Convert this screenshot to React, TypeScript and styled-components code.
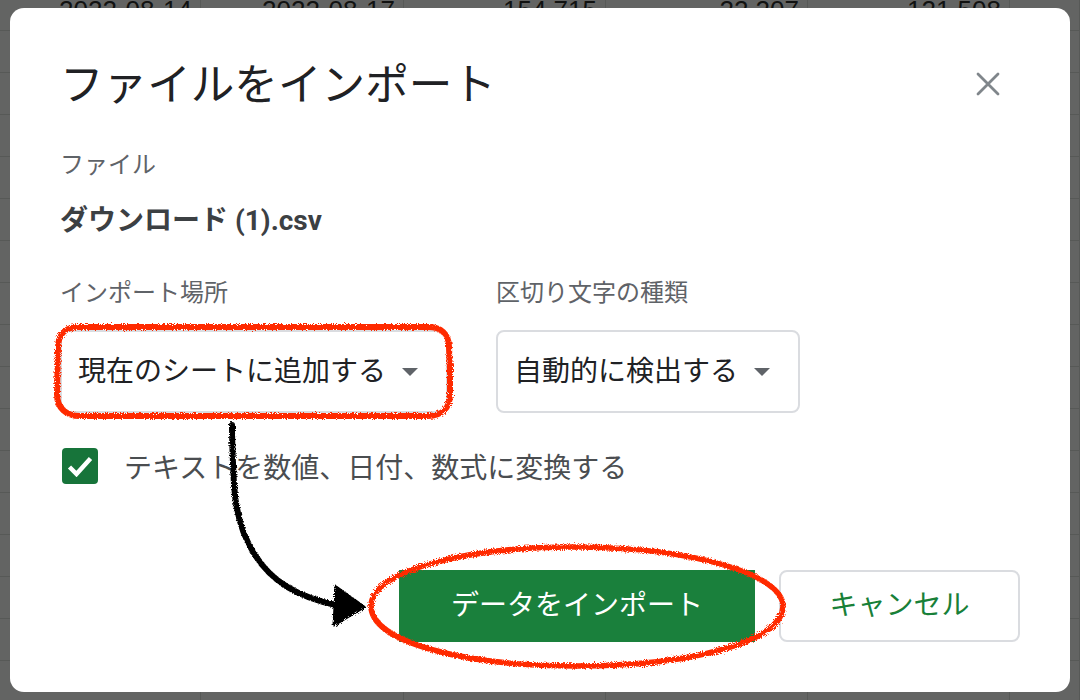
import styled, { createGlobalStyle } from 'styled-components'

const GlobalStyle = createGlobalStyle`
    html, body {
        margin: 0;
        padding: 0;
        background: #636463;
    }
`

const Page = styled.div`
    position: relative;
    width: 1080px;
    height: 700px;
    overflow: hidden;
    font-family: Roboto, 'Noto Sans CJK JP', sans-serif;
`

const Sheet = styled.div`
    display: grid;
    grid-template-columns: 201px 203px 202px 202px 202px 70px;
    grid-template-rows: 31px;
    grid-auto-rows: 42px;
    height: 700px;
    overflow: hidden;
    background: #636463;
`

const Cell = styled.div`
    box-sizing: border-box;
    padding-right: 8px;
    border-right: 1px solid #575957;
    border-bottom: 1px solid #575957;
    overflow: hidden;
    font-family: 'Liberation Sans', sans-serif;
    font-size: 26px;
    line-height: 20px;
    text-align: right;
    color: #111211;
`

const Dialog = styled.div`
    position: absolute;
    top: 8px;
    left: 10px;
    box-sizing: border-box;
    width: 1060px;
    height: 684px;
    padding: 50px;
    background: #fff;
    border-radius: 14px;
`

const Header = styled.div`
    display: flex;
    justify-content: space-between;
    align-items: center;
    height: 52px;
`

const Title = styled.div`
    margin-top: 4px;
    font-size: 43.6px;
    line-height: 52px;
    color: #202124;
`

const CloseIcon = styled.svg`
    width: 24px;
    height: 24px;
    margin-right: 20px;
`

const Label = styled.div`
    font-size: 24px;
    line-height: 32px;
    color: #5f6368;
`

const FileSection = styled.div`
    margin-top: 39px;
`

const FileName = styled.div`
    margin-top: 24px;
    font-size: 28px;
    font-weight: 700;
    line-height: 32px;
    color: #3c4043;
`

const Fields = styled.div`
    display: flex;
    gap: 48px;
    margin-top: 40px;
`

const Field = styled.div`
    display: flex;
    flex-direction: column;
    gap: 21px;
`

const Select = styled.div<{ $width: number }>`
    box-sizing: border-box;
    display: flex;
    justify-content: space-between;
    align-items: center;
    width: ${(p) => p.$width}px;
    height: 83px;
    padding: 0 28px 0 16px;
    border: 2px solid #dadce0;
    border-radius: 8px;
    font-size: 28px;
    color: #202124;
`

const SelectText = styled.span`
    margin-bottom: 6px;
`

const Caret = styled.span`
    width: 0;
    height: 0;
    border-left: 8px solid transparent;
    border-right: 8px solid transparent;
    border-top: 8px solid #5f6368;
`

const CheckRow = styled.div`
    display: flex;
    align-items: flex-start;
    gap: 26px;
    margin: 35px 0 0 2px;
    font-size: 28px;
    line-height: 36px;
    color: #4a4d50;
`

const CheckText = styled.span`
    margin-top: 3px;
`

const CheckBox = styled.span`
    display: flex;
    align-items: center;
    justify-content: center;
    width: 36px;
    height: 36px;
    border-radius: 4px;
    background: #17743a;
`

const Actions = styled.div`
    display: flex;
    justify-content: flex-end;
    gap: 24px;
    margin-top: 83px;
`

const ActionButton = styled.div<{ $primary?: boolean }>`
    box-sizing: border-box;
    display: flex;
    align-items: center;
    justify-content: center;
    width: ${(p) => (p.$primary ? 356 : 241)}px;
    height: 72px;
    padding-bottom: 6px;
    font-size: 28px;
    color: ${(p) => (p.$primary ? '#fff' : '#188038')};
    background: ${(p) => (p.$primary ? '#1a803c' : '#fff')};
    border: ${(p) => (p.$primary ? 'none' : '2px solid #dadce0')};
    border-radius: ${(p) => (p.$primary ? 0 : 8)}px;
`

const Annotations = styled.svg`
    position: absolute;
    top: 0;
    left: 0;
    width: 1080px;
    height: 700px;
    pointer-events: none;
`

const topRow = ['2022-08-14', '2022-08-17', '154,715', '22,207', '121,508', '']

const sheetCells = Array.from({ length: 17 * 6 }, (_, i) => (i < 6 ? topRow[i] : ''))

export default function App() {
    return (
        <Page>
            <GlobalStyle />
            <Sheet>
                {sheetCells.map((text, i) => (
                    <Cell key={i}>{text}</Cell>
                ))}
            </Sheet>
            <Dialog>
                <Header>
                    <Title>ファイルをインポート</Title>
                    <CloseIcon viewBox="0 0 24 24">
                        <path
                            d="M2 2 L22 22 M22 2 L2 22"
                            stroke="#80868b"
                            strokeWidth="2.800"
                            strokeLinecap="round"
                            fill="none"
                        />
                    </CloseIcon>
                </Header>
                <FileSection>
                    <Label>ファイル</Label>
                    <FileName>ダウンロード (1).csv</FileName>
                </FileSection>
                <Fields>
                    <Field>
                        <Label>インポート場所</Label>
                        <Select $width={388}>
                            <SelectText>現在のシートに追加する</SelectText>
                            <Caret />
                        </Select>
                    </Field>
                    <Field>
                        <Label>区切り文字の種類</Label>
                        <Select $width={304}>
                            <SelectText>自動的に検出する</SelectText>
                            <Caret />
                        </Select>
                    </Field>
                </Fields>
                <CheckRow>
                    <CheckBox>
                        <svg width="26" height="22" viewBox="0 0 26 22">
                            <path
                                d="M2.500 12 L9.500 19 L23.500 3.500"
                                stroke="#fff"
                                strokeWidth="4.500"
                                fill="none"
                            />
                        </svg>
                    </CheckBox>
                    <CheckText>テキストを数値、日付、数式に変換する</CheckText>
                </CheckRow>
                <Actions>
                    <ActionButton $primary>データをインポート</ActionButton>
                    <ActionButton>キャンセル</ActionButton>
                </Actions>
            </Dialog>
            <Annotations viewBox="0 0 1080 700">
                <defs>
                    <filter id="chalk" x="-5%" y="-5%" width="110%" height="110%">
                        <feTurbulence type="fractalNoise" baseFrequency="1.1" numOctaves="2" seed="7" />
                        <feDisplacementMap in="SourceGraphic" scale="5" />
                    </filter>
                </defs>
                <g filter="url(#chalk)" fill="none" strokeLinecap="round" strokeLinejoin="round">
                    <path
                        d="M450 372 L449 347 C449 334 441 327 428 327 L78 327 C65 327 58 335 58 348 L57 394 C57 408 66 416 80 416 L428 416 C442 416 450 408 450 394 L450 364"
                        stroke="#ff2b00"
                        strokeWidth="6"
                    />
                    <path
                        d="M371 606 C371 570 470 546 580 547 C692 548 783 574 783 606 C783 642 690 666 577 666 C463 666 371 642 371 606 Z"
                        stroke="#ff2b00"
                        strokeWidth="5.500"
                    />
                    <path
                        d="M232 425 C232 445 233 465 234 485 C236 515 243 537 255 555 C272 582 298 597 336 605"
                        stroke="#000"
                        strokeWidth="6"
                    />
                    <path d="M336 587 L364 607 L334 625 Z" fill="#000" stroke="#000" strokeWidth="3" />
                </g>
            </Annotations>
        </Page>
    )
}
